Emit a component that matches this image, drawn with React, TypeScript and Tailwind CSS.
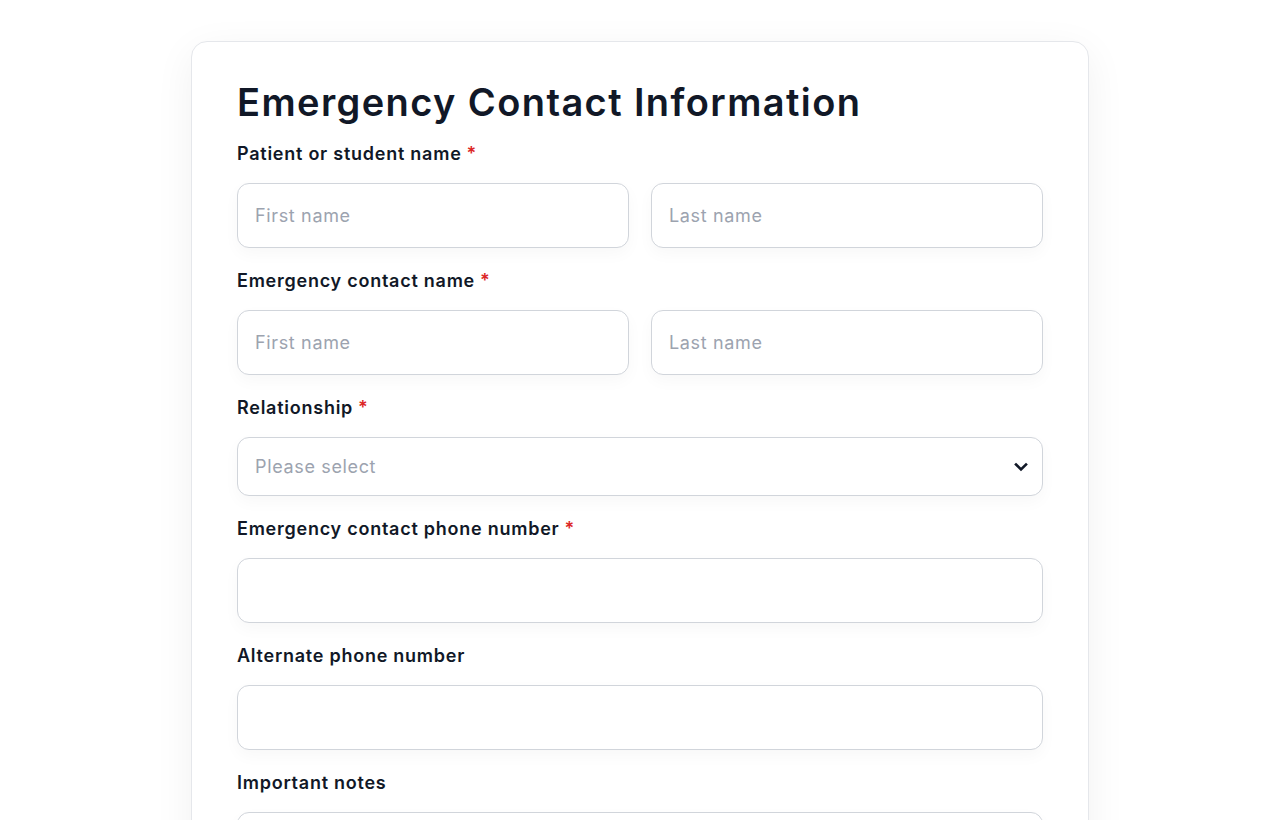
import React from "react";

const font = { fontFamily: "Inter, 'Noto Sans', sans-serif" };

function Label({ text, required }: { text: string; required?: boolean }) {
  return (
    <div className="text-[18px] leading-6 font-semibold text-[#111827] tracking-[0.75px] mb-[17px]">
      {text}
      {required && <span className="text-[#dc2626] ml-[5px]">*</span>}
    </div>
  );
}

function Input({ placeholder }: { placeholder?: string }) {
  return (
    <div className="h-[65px] w-full rounded-xl border border-[#d1d5db] bg-white shadow-[0_6px_16px_rgba(0,0,0,0.03)] flex items-center px-[17px] text-[18px] tracking-[0.65px] text-[#9ca3af]">
      {placeholder}
    </div>
  );
}

export default function App() {
  return (
    <div className="min-h-[820px] bg-white pt-[41px] flex justify-center" style={font}>
      <div className="w-[898px] rounded-2xl border border-[#e5e7eb] bg-white shadow-[0_10px_40px_rgba(0,0,0,0.06)] px-[45px] pt-[34px] pb-10">
        <h1 className="text-[38px] leading-[52px] font-semibold text-[#111827] tracking-[1.4px] mb-[14px]">
          Emergency Contact Information
        </h1>

        <div className="mb-[21px]">
          <Label text="Patient or student name" required />
          <div className="grid grid-cols-2 gap-[22px]">
            <Input placeholder="First name" />
            <Input placeholder="Last name" />
          </div>
        </div>

        <div className="mb-[21px]">
          <Label text="Emergency contact name" required />
          <div className="grid grid-cols-2 gap-[22px]">
            <Input placeholder="First name" />
            <Input placeholder="Last name" />
          </div>
        </div>

        <div className="mb-[21px]">
          <Label text="Relationship" required />
          <div className="h-[59px] w-full rounded-xl border border-[#d1d5db] bg-white shadow-[0_6px_16px_rgba(0,0,0,0.03)] flex items-center justify-between pl-[17px] pr-[14px] text-[18px] tracking-[0.65px] text-[#9ca3af]">
            <span>Please select</span>
            <svg width="14" height="14" viewBox="0 0 14 14" fill="none">
              <path d="M2 4.5L7 9.5L12 4.5" stroke="#111827" strokeWidth="2.6" strokeLinecap="square" />
            </svg>
          </div>
        </div>

        <div className="mb-[21px]">
          <Label text="Emergency contact phone number" required />
          <Input />
        </div>

        <div className="mb-[21px]">
          <Label text="Alternate phone number" />
          <Input />
        </div>

        <div className="mb-[21px]">
          <Label text="Important notes" />
          <div className="h-[120px] w-full rounded-xl border border-[#d1d5db] bg-white shadow-[0_6px_16px_rgba(0,0,0,0.03)]" />
        </div>
      </div>
    </div>
  );
}
